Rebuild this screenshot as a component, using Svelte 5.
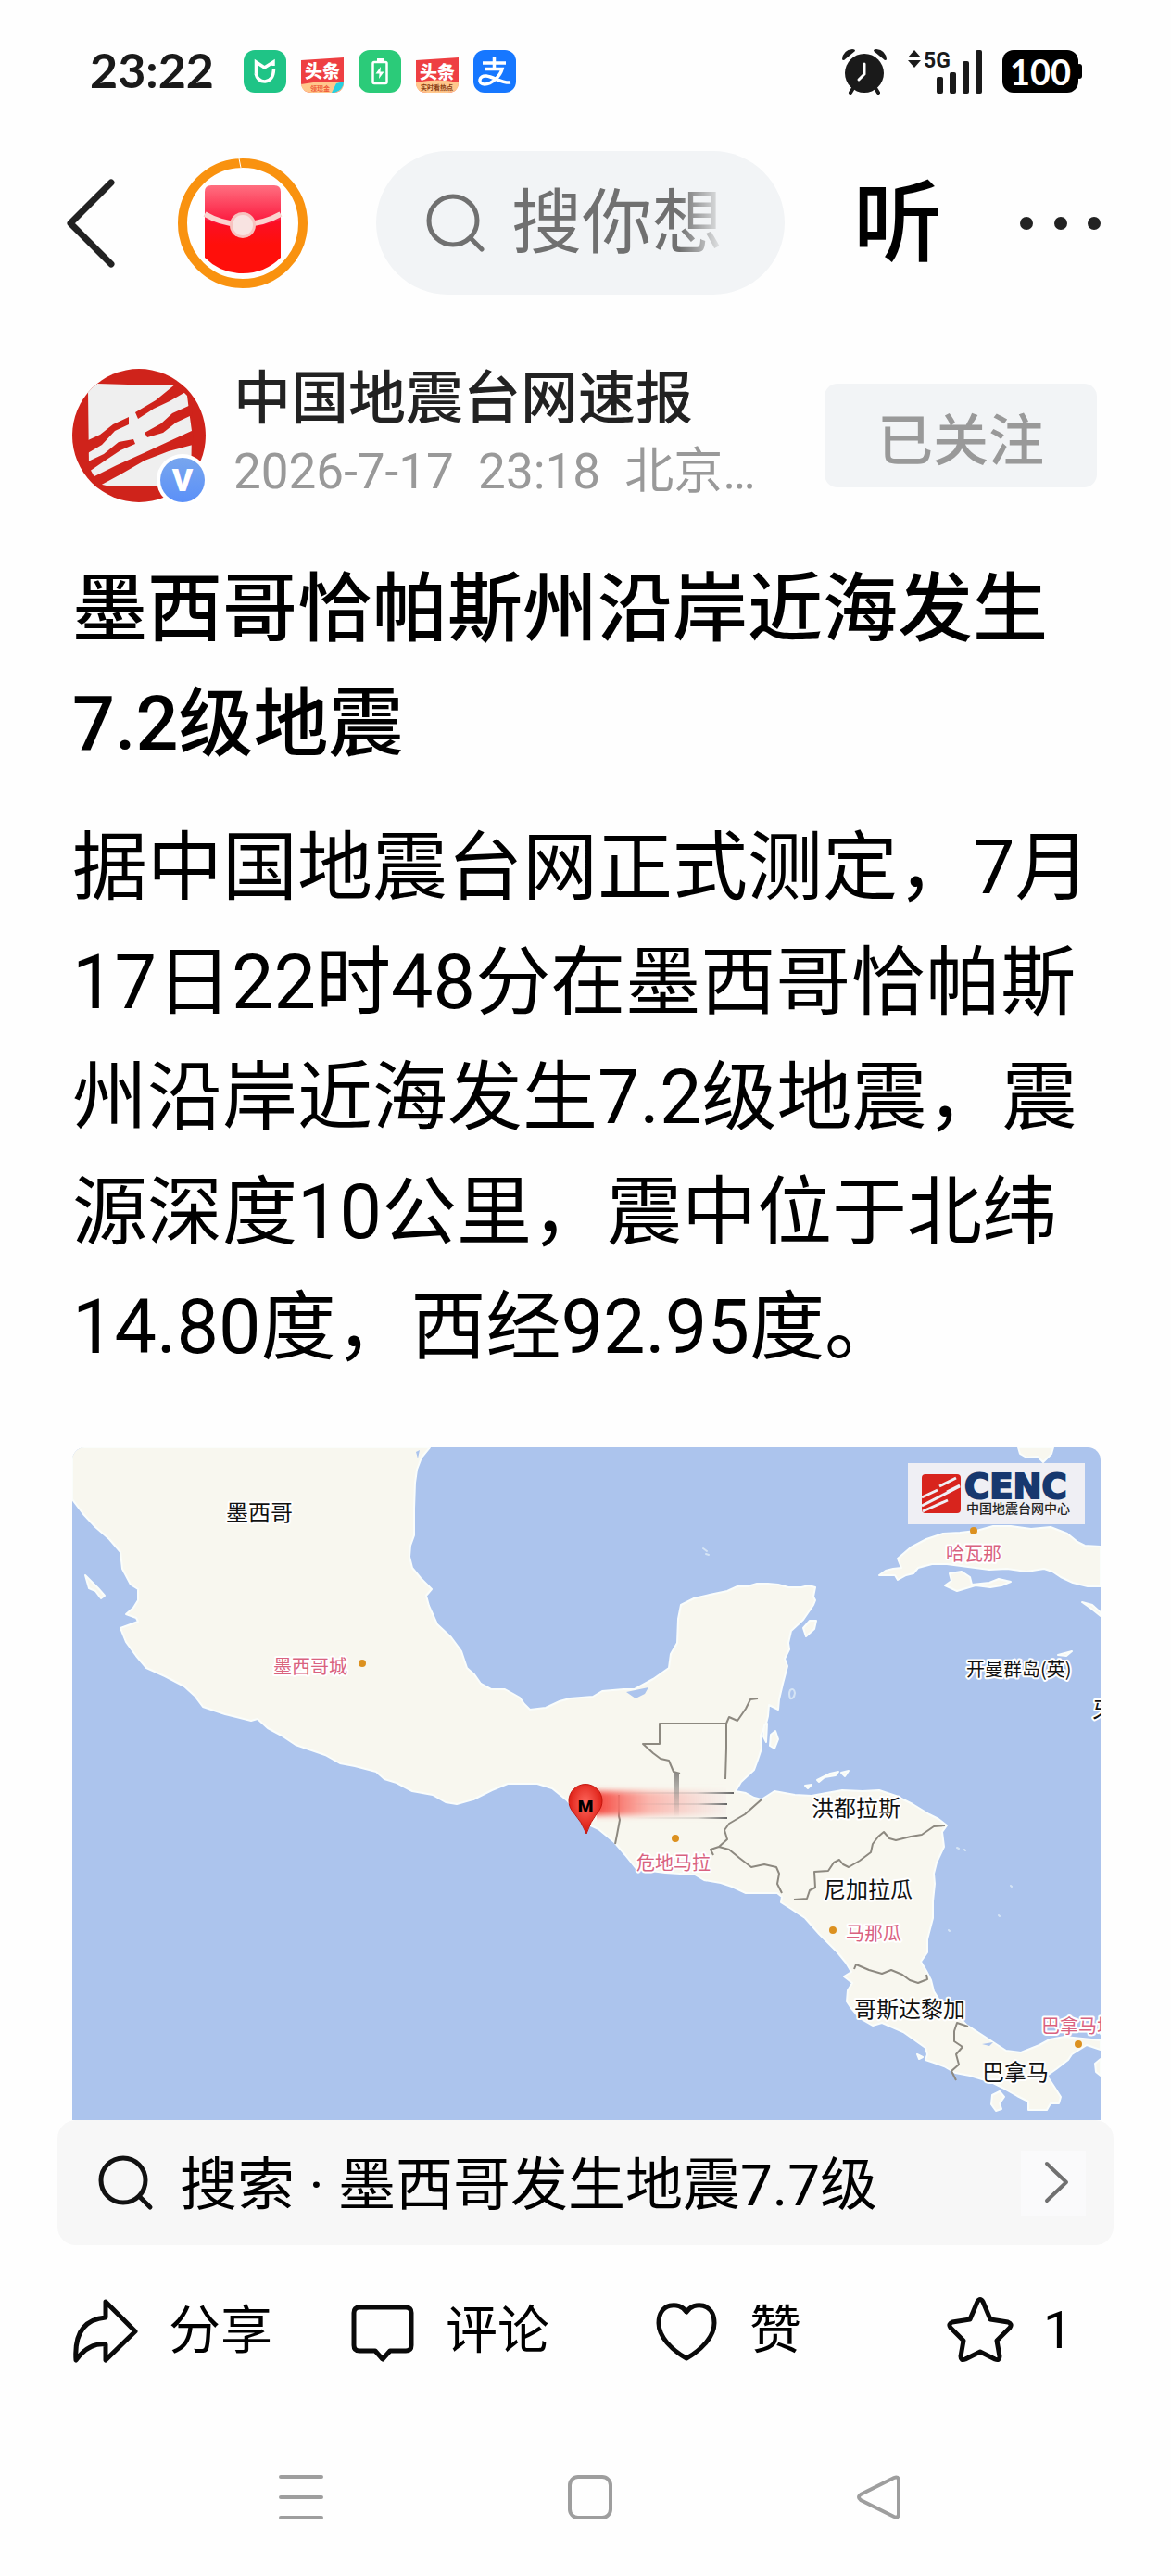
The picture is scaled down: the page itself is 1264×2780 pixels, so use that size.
<script>
  const countries = [
    { name: '墨西哥', x: 166, y: 79 },
    { name: '牙买加', x: 1101, y: 292 },
    { name: '洪都拉斯', x: 798, y: 398 },
    { name: '尼加拉瓜', x: 811, y: 486 },
    { name: '哥斯达黎加', x: 844, y: 615 },
    { name: '巴拿马', x: 982, y: 683 }
  ];

  const capitals = [
    { name: '墨西哥城', x: 217, y: 244, cx: 313, cy: 233 },
    { name: '哈瓦那', x: 943, y: 122, cx: 973, cy: 90 },
    { name: '危地马拉', x: 609, y: 456, cx: 651, cy: 422 },
    { name: '马那瓜', x: 835, y: 532, cx: 821, cy: 521 },
    { name: '巴拿马城', x: 1046, y: 632, cx: 1086, cy: 644 }
  ];

  let liked = $state(false);
  let starred = $state(false);
</script>

{#snippet mark()}
  <path
    d="M17 24 L27 16 L60 17 L112 17 L124 29 L126 45 L129 67 L128 126 L41 127 L28 124 L18 106 Z"
    fill="#efefef"
  />
  <path
    d="M15 78 L30 71 L44 60 L61 52 L61 60 L46 67 L32 82 L15 92 Z
       M68 47 L90 34 L112 16 L124 24 L105 35 L88 43 L71 54 Z
       M78 69 L96 59 L108 48 L130 38 L129 50 L112 58 L98 69 L81 74 Z
       M15 101 L34 92 L50 79 L66 76 L68 81 L52 88 L34 100 L18 111 Z
       M20 118 L48 104 L77 91 L105 78 L131 66 L130 82 L104 89 L78 99 L52 114 L28 127 Z"
    fill="#cf231b"
  />
{/snippet}

<div class="page" lang="zh-CN">
  <div class="status">
    <div class="status-side">
      <span class="time">23:22</span>
      <div class="apps">
        <svg width="46" height="46" viewBox="0 0 46 46">
          <rect width="46" height="46" rx="12" fill="#1fc486" />
          <path d="M13.500 25 V13 L22.500 19 L32 13 V17" fill="none" stroke="#fff" stroke-width="3.500" />
          <path d="M13 25 Q15 34 23 34 Q32 33 32.500 21" fill="none" stroke="#fff" stroke-width="3.500" />
        </svg>
        <svg width="46" height="46" viewBox="0 0 46 46">
          <path d="M0 11 L46 8 V36 Q45 46 34 46 H12 Q1 46 0 36 Z" fill="#ee3f42" />
          <path d="M0 37 Q24 32 46 35 Q46 46 34 46 H12 Q1 46 0 37 Z" fill="#ffc78c" />
          <path d="M38 36 L46 34 Q46 43 36 46 H33 Z" fill="#26cfe0" />
          <text class="tt" x="4" y="30">头条</text>
          <text class="tt-small" x="10" y="44" fill="#ef5b3a">领现金</text>
        </svg>
        <svg width="46" height="46" viewBox="0 0 46 46">
          <rect width="46" height="46" rx="12" fill="#2bcb79" />
          <rect x="20" y="9" width="7" height="4" fill="#fff" />
          <rect x="15.500" y="13" width="15" height="23" rx="1.500" fill="none" stroke="#fff" stroke-width="2.500" />
          <path d="M24 18 L18.500 25.500 H22.500 L22 31 L27.500 23.500 H23.500 Z" fill="#fff" />
        </svg>
        <svg width="46" height="46" viewBox="0 0 46 46">
          <path d="M0 11 L46 8 V36 Q45 46 34 46 H12 Q1 46 0 36 Z" fill="#ee3f42" />
          <path d="M0 35 Q24 30 46 35 Q46 46 34 46 H12 Q1 46 0 37 Z" fill="#ffc78c" />
          <text class="tt" x="4" y="31">头条</text>
          <text class="tt-small" x="5" y="43" fill="#8a3d12">实时看热点</text>
        </svg>
        <svg width="46" height="46" viewBox="0 0 46 46">
          <rect width="46" height="46" rx="12" fill="#1677ff" />
          <path
            d="M10 14 H35 M22.500 8 V20 M13 20.500 H31 C29 28 20 37 12 37 C4 37 6 27 14 28 C22 29 31 36 40 35"
            fill="none"
            stroke="#fff"
            stroke-width="3.500"
          />
        </svg>
      </div>
    </div>
    <div class="status-side">
      <svg class="alarm" width="48" height="50" viewBox="0 0 48 50">
        <g fill="#1a1a1a">
          <path d="M0 12 Q1 2 11 1 Q14 1 14 3 L2 13 Q0 13 0 12 Z" />
          <path d="M48 12 Q47 2 37 1 Q34 1 34 3 L46 13 Q48 13 48 12 Z" />
          <circle cx="24" cy="27" r="21" />
        </g>
        <path d="M12 43 L9 48 M36 43 L39 48" stroke="#1a1a1a" stroke-width="4" stroke-linecap="round" />
        <path d="M24 17 V28 L18 34" fill="none" stroke="#fff" stroke-width="3" stroke-linecap="round" />
      </svg>
      <svg class="signal" width="80" height="50" viewBox="0 0 80 50">
        <g fill="#1a1a1a">
          <path d="M0 10 L7 2 L14 10 Z M0 13 L7 21 L14 13 Z" />
          <rect x="31" y="31" width="7" height="18" rx="2" />
          <rect x="45" y="26" width="7" height="23" rx="2" />
          <rect x="59" y="14" width="7" height="35" rx="2" />
          <rect x="73" y="2" width="7" height="47" rx="2" />
          <text class="net" x="17" y="21">5G</text>
        </g>
      </svg>
      <div class="battery">100</div>
    </div>
  </div>

  <nav class="topbar">
    <button class="plain" aria-label="返回">
      <svg width="56" height="100" viewBox="0 0 56 100">
        <path d="M50 6 L6 50 L50 94" fill="none" stroke="#222" stroke-width="7" stroke-linecap="round" stroke-linejoin="round" />
      </svg>
    </button>
    <button class="plain" aria-label="红包">
      <svg width="140" height="140" viewBox="0 0 140 140">
        <defs>
          <linearGradient id="flap" x1="0" y1="0" x2="0" y2="1">
            <stop offset="0" stop-color="#ff6f80" />
            <stop offset="1" stop-color="#fb0d35" />
          </linearGradient>
          <linearGradient id="pocket" x1="0" y1="0" x2="0" y2="1">
            <stop offset="0" stop-color="#fa0f2c" />
            <stop offset="0.5" stop-color="#ff0f0b" />
          </linearGradient>
        </defs>
        <circle cx="70" cy="70" r="65" fill="#fff" stroke="#f9920f" stroke-width="10" />
        <path d="M66 0 L68 10" stroke="#fff" stroke-width="1" />
        <path d="M29 62 H111 V107 Q94 124 70 124 Q46 124 29 107 Z" fill="url(#pocket)" />
        <path d="M29 36 Q29 29 36 29 H104 Q111 29 111 36 V66 Q92 74 70 74 Q48 74 29 66 Z" fill="url(#flap)" />
        <path d="M29 60 Q48 71 70 71 Q92 71 111 60" fill="none" stroke="#fbd3cf" stroke-width="6" />
        <circle cx="70" cy="72" r="14" fill="#f7c2bf" />
        <circle cx="70" cy="72" r="11" fill="#f8e3e1" />
      </svg>
    </button>
    <label class="search">
      <svg width="64" height="64" viewBox="0 0 64 64">
        <circle cx="29" cy="29" r="26" fill="none" stroke="#707070" stroke-width="5" />
        <path d="M48 48 L60 60" stroke="#707070" stroke-width="5" stroke-linecap="round" />
      </svg>
      <input type="text" placeholder="搜你想" aria-label="搜索" />
    </label>
    <button class="plain listen">听</button>
    <button class="plain" aria-label="更多">
      <svg width="111" height="40" viewBox="0 0 111 40">
        <g fill="#222">
          <circle cx="25" cy="20" r="7" />
          <circle cx="62" cy="20" r="7" />
          <circle cx="98" cy="20" r="7" />
        </g>
      </svg>
    </button>
  </nav>

  <main>
    <header class="author">
      <svg class="avatar" width="144" height="144" viewBox="0 0 144 144">
        <defs>
          <clipPath id="round"><circle cx="72" cy="72" r="72" /></clipPath>
          <linearGradient id="vip" x1="0" y1="0" x2="0" y2="1">
            <stop offset="0" stop-color="#78a6ee" />
            <stop offset="1" stop-color="#5b90f8" />
          </linearGradient>
        </defs>
        <g clip-path="url(#round)">
          <rect width="144" height="144" fill="#cf231b" />
          {@render mark()}
        </g>
        <circle cx="119" cy="120" r="28" fill="#fff" />
        <circle cx="119" cy="120" r="24" fill="url(#vip)" />
        <text class="vip" x="119" y="132">V</text>
      </svg>
      <div class="who">
        <div class="name">中国地震台网速报</div>
        <div class="meta">2026-7-17  23:18  北京…</div>
      </div>
      <button class="follow">已关注</button>
    </header>

    <article>
      <h1>墨西哥恰帕斯州沿岸近海发生7.2级地震</h1>
      <p>据中国地震台网正式测定，7月17日22时48分在墨西哥恰帕斯州沿岸近海发生7.2级地震，震源深度10公里，震中位于北纬14.80度，西经92.95度。</p>

      <svg class="map" viewBox="0 0 1110 726" role="img" aria-label="震中位置">
        <defs>
          <linearGradient id="smear" x1="0" y1="0" x2="1" y2="0">
            <stop offset="0" stop-color="#f5483f" />
            <stop offset="0.4" stop-color="#fba59c" stop-opacity="0.8" />
            <stop offset="1" stop-color="#f3ece9" stop-opacity="0.6" />
          </linearGradient>
          <linearGradient id="dark" x1="0" y1="0" x2="1" y2="0">
            <stop offset="0" stop-color="#777" stop-opacity="0" />
            <stop offset="0.7" stop-color="#777" stop-opacity="0.2" />
            <stop offset="1" stop-color="#666" />
          </linearGradient>
          <linearGradient id="fall" x1="0" y1="0" x2="0" y2="1">
            <stop offset="0" stop-color="#8c8a86" />
            <stop offset="1" stop-color="#8c8a86" stop-opacity="0" />
          </linearGradient>
          <radialGradient id="pin" cx="0.5" cy="0.4" r="0.6">
            <stop offset="0" stop-color="#ff6a60" />
            <stop offset="1" stop-color="#d81208" />
          </radialGradient>
          <filter id="soft" x="-10%" y="-30%" width="120%" height="160%"><feGaussianBlur stdDeviation="0 3" /></filter>
        </defs>

        <rect width="1110" height="726" fill="#acc4ed" />

        <g class="land">
          <path
            d="M0 0 H386 L377 11 L372 24 L370 38 L369 66 L369 95 L365 106 L364 118 L367 130 L376 141 L388 153
               L382 160 L385 171 L394 191 L409 205 L420 220 L426 238 L434 245 L441 255 L452 261 L467 261 L476 266
               L483 270 L488 277 L494 283 L511 281 L526 274 L537 271 L562 269 L572 263 L595 261 L607 261 L627 250
               L644 238 L646 223 L653 211 L654 185 L657 170 L671 163 L688 159 L707 155 L718 150 L729 150 L739 147
               L751 147 L762 148 L773 151 L787 151 L795 149 L802 151 L800 161 L802 165 L800 170 L789 186 L776 198
               L773 211 L774 218 L769 228 L772 236 L767 255 L763 272 L762 283 L752 278 L751 290 L749 298 L743 311
               L744 325 L740 337 L736 348 L722 361 L716 371 L727 373 L736 378 L744 380 L758 371 L780 375 L798 376
               L814 373 L831 370 L853 371 L871 370 L889 376 L907 385 L925 396 L935 401 L944 408 L939 415 L941 431
               L933 448 L930 460 L931 471 L929 490 L929 508 L923 531 L923 545 L916 555 L922 565 L927 575 L930 587
               L935 595 L953 611 L965 623 L988 638 L1008 651 L1024 653 L1044 645 L1055 639 L1071 636 L1110 640
               V650 L1095 645 L1079 655 L1075 661 L1062 671 L1052 678 L1060 690 L1067 701 L1065 708 L1056 708
               L1052 715 L1032 715 L1032 706 L1020 700 L1004 691 L992 685 L969 678 L953 675 L941 668 L930 664
               L921 661 L923 655 L921 648 L897 631 L874 621 L864 624 L850 616 L840 604 L836 598 L837 586 L842 578
               L833 571 L841 566 L835 556 L826 545 L806 525 L791 508 L776 498 L765 491 L766 485 L761 481 L727 481
               L712 474 L700 470 L682 467 L672 461 L640 459 L609 455 L597 440 L585 426 L568 412 L553 405 L534 381
               L518 368 L502 363 L470 363 L453 370 L433 380 L415 385 L403 383 L389 375 L367 371 L350 362 L337 358
               L328 350 L305 344 L289 341 L273 332 L241 321 L226 311 L211 303 L200 293 L193 295 L165 288 L141 280
               L132 268 L121 258 L100 247 L80 238 L69 225 L58 210 L52 195 L71 188 L69 184 L58 180 L66 173 L71 165
               L71 153 L63 148 L54 131 L52 113 L40 99 L25 86 L12 72 L0 56 Z"
          />
          <path
            d="M891 120 L905 108 L922 99 L940 93 L958 92 L976 90 L994 85 L1013 85 L1035 88 L1056 86 L1074 93
               L1085 102 L1093 106 L1110 107 V150 L1096 150 L1080 146 L1067 140 L1058 134 L1049 131 L1030 134
               L1009 131 L990 132 L944 126 L928 126 L913 130 L908 136 L900 138 L891 143 L888 138 L871 138 L878 133
               L886 131 L895 130 Z"
          />
          <path d="M947 136 L960 134 L969 140 L971 148 L990 146 L1000 142 L1013 145 L1003 149 L991 151 L975 149 L955 155 L942 149 L949 144 Z" />
          <path d="M1021 0 H1059 L1057 7 L1048 16 L1042 10 L1030 11 L1023 7 Z" />
          <path d="M14 138 L20 144 L28 152 L35 160 L31 163 L25 155 L18 152 Z" />
          <path d="M789 195 L796 187 L803 187 L801 196 L792 204 Z" />
          <path d="M804 359 L818 352 L827 350 L824 354 L812 356 L806 361 Z M830 351 L838 349 L834 355 Z M791 365 L798 364 L794 368 Z" />
          <path d="M754 310 L759 306 L762 315 L758 325 L753 322 Z M747 300 L750 298 L749 318 L746 312 Z" />
          <path d="M1064 224 L1079 220 L1073 225 Z M1090 167 L1101 170 L1110 178 V182 L1100 174 Z" />
          <path d="M993 699 L1001 695 L1006 701 L1001 708 L1003 714 L997 716 L992 709 Z M912 655 L918 658 L914 660 Z" />
          <path d="M1104 665 L1110 660 V678 L1105 674 Z" />
        </g>
        <path d="M775 262 Q779 259 780 265 Q779 272 775 271 Q773 266 775 262 Z" class="reef" />
        <path d="M681 109 L685 112 M684 115 L687 116 M955 432 L957 433 M963 434 L964 435 M1013 473 L1014 474 M1000 505 L1001 506 M946 521 L947 522" class="reef" />
        <path d="M598 264 L622 259 L618 266 L608 271 Z M982 644 L994 642 L990 646 Z M371 5 L375 3 L373 12 Z" fill="#acc4ed" />

        <g class="borders">
          <path d="M740 271 L732 272 L727 282 L718 295 L709 291 L706 298 H634 V320 H616 L627 330 L635 336 L644 338 L649 350 L656 352" />
          <path d="M706 298 V325 L705 358 M590 375 V398 L591 402 L588 418 L586 428" />
          <path d="M744 380 L726 396 L709 406 L704 413 L707 423 L698 431 L689 434 L692 440 M698 431 L709 434 L720 443 L733 453 L747 450 L760 453 L763 460 L761 471 L766 481" />
          <path d="M779 488 L793 487 L796 478 L802 475 L801 458 L816 457 L822 448 L828 445 L832 450 L838 453 L850 446 L862 437 L864 428 L870 420 L876 415 L882 422 L889 424 L905 420 L917 418 L930 409 L942 408" />
          <path d="M844 563 L846 558 L860 564 L874 568 L884 564 L896 569 L904 575 L913 578 L923 574 L922 569" />
          <path d="M967 625 L955 621 L952 630 L952 641 L961 647 L954 655 L957 666 L949 673 L954 683" />
        </g>

        <rect x="566" y="371" width="140" height="26" fill="url(#smear)" filter="url(#soft)" />
        <g fill="url(#dark)">
          <rect x="580" y="372" width="134" height="2" />
          <rect x="600" y="384" width="107" height="2" />
          <rect x="600" y="399" width="107" height="2" />
        </g>
        <rect x="649" y="351" width="6" height="48" fill="url(#fall)" />

        <path d="M555 417 Q550 404 541 394 A18 18 0 1 1 567 394 Q559 404 555 417 Z" fill="url(#pin)" stroke="#c3140c" stroke-width="1" />
        <text class="quake" x="554" y="394">M</text>

        {#each capitals as c}
          <circle cx={c.cx} cy={c.cy} r="4" fill="#dc911f" />
          <text class="capital" x={c.x} y={c.y}>{c.name}</text>
        {/each}
        {#each countries as c}
          <text class="country" x={c.x} y={c.y}>{c.name}</text>
        {/each}
        <text class="country isle" x="965" y="247">开曼群岛(英)</text>

        <rect x="902" y="17" width="191" height="66" fill="#efeff4" />
        <rect x="917" y="29" width="42" height="42" rx="4" fill="#d8241d" />
        <g stroke="#efeff4" stroke-width="3">
          <path d="M917 54 L934 46 M917 63 L958 42 M918 69 L945 57 M936 42 L954 33 M944 48 L958 41" />
        </g>
        <text class="cenc" x="963" y="55">CENC</text>
        <text class="cenc-name" x="965" y="71">中国地震台网中心</text>
      </svg>
    </article>
  </main>

  <a class="related" href="#search">
    <svg width="60" height="60" viewBox="0 0 60 60">
      <circle cx="27" cy="27" r="24" fill="none" stroke="#111" stroke-width="5" />
      <path d="M45 45 L56 56" stroke="#111" stroke-width="5" stroke-linecap="round" />
    </svg>
    <span>搜索 · 墨西哥发生地震7.7级</span>
    <i class="go">
      <svg width="70" height="70" viewBox="0 0 70 70">
        <path d="M28 14 L49 34 L28 54" fill="none" stroke="#707070" stroke-width="4" stroke-linecap="round" stroke-linejoin="round" />
      </svg>
    </i>
  </a>

  <div class="actions">
    <button class="plain">
      <svg width="72" height="72" viewBox="0 0 72 72">
        <path d="M36 5 L68 37 L36 68 V51 Q18 49 4 68 Q1 25 36 22 Z" class="line" />
      </svg>
      分享
    </button>
    <button class="plain">
      <svg width="72" height="72" viewBox="0 0 72 72">
        <path d="M11 11 H61 Q67 11 67 17 V52 Q67 58 61 58 H44 L36 67 L28 58 H11 Q5 58 5 52 V17 Q5 11 11 11 Z" class="line" />
      </svg>
      评论
    </button>
    <button class="plain" aria-pressed={liked} onclick={() => (liked = !liked)}>
      <svg width="72" height="72" viewBox="0 0 72 72">
        <path d="M36 16 C28 4 6 6 6 28 C6 43 20 57 36 66 C52 57 66 43 66 28 C66 6 44 4 36 16 Z" class="line" />
      </svg>
      赞
    </button>
    <button class="plain" aria-pressed={starred} onclick={() => (starred = !starred)}>
      <svg width="72" height="72" viewBox="0 0 72 72">
        <path
          d="M33 5 Q36 0 39 5 L47 24 L66 27 Q71 29 68 33 L54 47 L57 64 Q57 69 52 67 L36 59 L20 67 Q15 69 15 64 L18 47 L4 33 Q1 29 6 27 L25 24 Z"
          class="line"
        />
      </svg>
      1
    </button>
  </div>

  <div class="system">
    <button class="plain" aria-label="最近任务">
      <svg width="50" height="50" viewBox="0 0 50 50">
        <path d="M3 3 H47 M3 25 H47 M3 47 H47" stroke="#9e9e9e" stroke-width="4" stroke-linecap="round" />
      </svg>
    </button>
    <button class="plain" aria-label="主屏幕">
      <svg width="50" height="50" viewBox="0 0 50 50">
        <rect x="3" y="3" width="44" height="44" rx="9" fill="none" stroke="#9e9e9e" stroke-width="4" />
      </svg>
    </button>
    <button class="plain" aria-label="后退">
      <svg width="50" height="50" viewBox="0 0 50 50">
        <path d="M41 4 Q46 2 46 7 V43 Q46 48 41 46 L5 28 Q1 25 5 22 Z" fill="none" stroke="#9e9e9e" stroke-width="4" />
      </svg>
    </button>
  </div>
</div>

<style>
  :global(body) {
    background: #fefefe;
  }

  .page {
    color: #000;
    font-family: Roboto, "Noto Sans CJK SC", sans-serif;
  }

  svg {
    display: block;
    flex: none;
  }

  .plain {
    padding: 0;
    border: none;
    background: none;
    color: inherit;
    font: inherit;
    cursor: pointer;
  }

  .status {
    display: flex;
    justify-content: space-between;
    align-items: center;
    height: 154px;
    padding: 0 100px 0 97px;
  }

  .status-side {
    display: flex;
    align-items: center;
  }

  .time {
    padding-bottom: 4px;
    color: #1a1a1a;
    font: 700 52px/60px Lato, sans-serif;
  }

  .apps {
    display: flex;
    gap: 16px;
    margin-left: 32px;
  }

  .tt {
    fill: #fff;
    font: 900 19px "Noto Sans CJK SC", sans-serif;
  }

  .tt-small {
    font: 700 7px "Noto Sans CJK SC", sans-serif;
  }

  .signal {
    margin: 0 22px 0 23px;
  }

  .net {
    font: 700 23px Roboto, sans-serif;
  }

  .battery {
    position: relative;
    width: 82px;
    border-radius: 12px;
    background: #000;
    color: #fff;
    font: 700 38px/46px Lato, sans-serif;
    text-align: center;
  }

  .battery::after {
    content: "";
    position: absolute;
    top: 15px;
    right: -4px;
    width: 6px;
    height: 16px;
    border-radius: 3px;
    background: #000;
  }

  .topbar {
    display: flex;
    align-items: center;
    gap: 66px;
    margin-top: 9px;
    padding: 0 70px;
  }

  .search {
    display: flex;
    flex: 1;
    align-items: center;
    gap: 28px;
    min-width: 0;
    height: 155px;
    margin: 0 8px;
    padding: 0 68px 0 54px;
    box-sizing: border-box;
    border-radius: 78px;
    background: #f2f4f6;
  }

  .search input {
    flex: 1;
    min-width: 0;
    height: 110px;
    padding: 0;
    border: none;
    outline: none;
    background: none;
    color: #707070;
    font: 400 76px/110px Roboto, "Noto Sans CJK SC", sans-serif;
    mask-image: linear-gradient(to right, #000 80%, rgba(0, 0, 0, 0.1));
  }

  .search input::placeholder {
    color: #707070;
    opacity: 1;
  }

  .listen {
    font-size: 96px;
    font-weight: 500;
    line-height: 110px;
  }

  .author {
    display: flex;
    align-items: center;
    gap: 30px;
    margin-top: 74px;
    padding: 0 80px 0 78px;
  }

  .vip {
    fill: #fff;
    font: 900 34px Roboto, sans-serif;
    text-anchor: middle;
  }

  .who {
    flex: 1;
    min-width: 0;
  }

  .name {
    color: #222;
    font-size: 62px;
    font-weight: 500;
    line-height: 78px;
  }

  .meta {
    color: #999;
    font-size: 53px;
    line-height: 78px;
    white-space: pre;
  }

  .follow {
    width: 294px;
    height: 112px;
    border: none;
    border-radius: 14px;
    background: #f2f4f6;
    color: #999;
    font: 500 60px Roboto, "Noto Sans CJK SC", sans-serif;
    cursor: pointer;
  }

  article {
    margin-top: 48px;
    padding: 0 76px 0 78px;
  }

  h1,
  p {
    margin: 0;
    font-size: 81px;
    line-height: 124px;
  }

  h1 {
    font-weight: 500;
  }

  p {
    margin-top: 31px;
  }

  .map {
    width: 100%;
    margin-top: 67px;
    border-radius: 14px 14px 0 0;
  }

  .land {
    fill: #f8f7ef;
    stroke: #fafdfb;
    stroke-width: 2;
    stroke-linejoin: round;
  }

  .reef {
    fill: none;
    stroke: #d5e4f5;
    stroke-width: 2;
    stroke-linecap: round;
  }

  .borders {
    fill: none;
    stroke: #8d8980;
    stroke-width: 2;
    stroke-linejoin: round;
  }

  .country,
  .capital {
    stroke: #fff;
    stroke-width: 4px;
    stroke-linejoin: round;
    paint-order: stroke;
    font-family: "Noto Sans CJK SC", sans-serif;
  }

  .country {
    fill: #111;
    font-size: 24px;
    font-weight: 400;
  }

  .capital {
    fill: #d9627f;
    font-size: 20px;
  }

  .isle {
    font-size: 20px;
  }

  .quake {
    font: 900 19px Roboto, sans-serif;
    text-anchor: middle;
  }

  .cenc {
    fill: #17386f;
    stroke: #17386f;
    stroke-width: 2px;
    font: 700 37px "DejaVu Sans", sans-serif;
  }

  .cenc-name {
    fill: #222;
    font: 500 14px "Noto Sans CJK SC", sans-serif;
  }

  .related {
    display: flex;
    align-items: center;
    gap: 28px;
    height: 135px;
    margin: 0 62px;
    padding: 0 30px 0 44px;
    border-radius: 20px;
    background: #f7f7f7;
    color: #000;
    font-size: 62px;
    text-decoration: none;
  }

  .related span {
    flex: 1;
    padding-bottom: 6px;
  }

  .go {
    background: #fafafb;
  }

  .actions {
    display: grid;
    grid-template-columns: 299fr 328fr 317fr 166fr;
    margin-top: 52px;
    padding: 0 76px 0 78px;
    font-size: 56px;
    line-height: 80px;
  }

  .actions button {
    display: flex;
    align-items: center;
    gap: 32px;
  }

  .line {
    fill: none;
    stroke: #0a0a0a;
    stroke-width: 5;
    stroke-linejoin: round;
  }

  .system {
    display: flex;
    justify-content: space-between;
    margin-top: 115px;
    padding: 0 290px 0 300px;
  }
</style>
